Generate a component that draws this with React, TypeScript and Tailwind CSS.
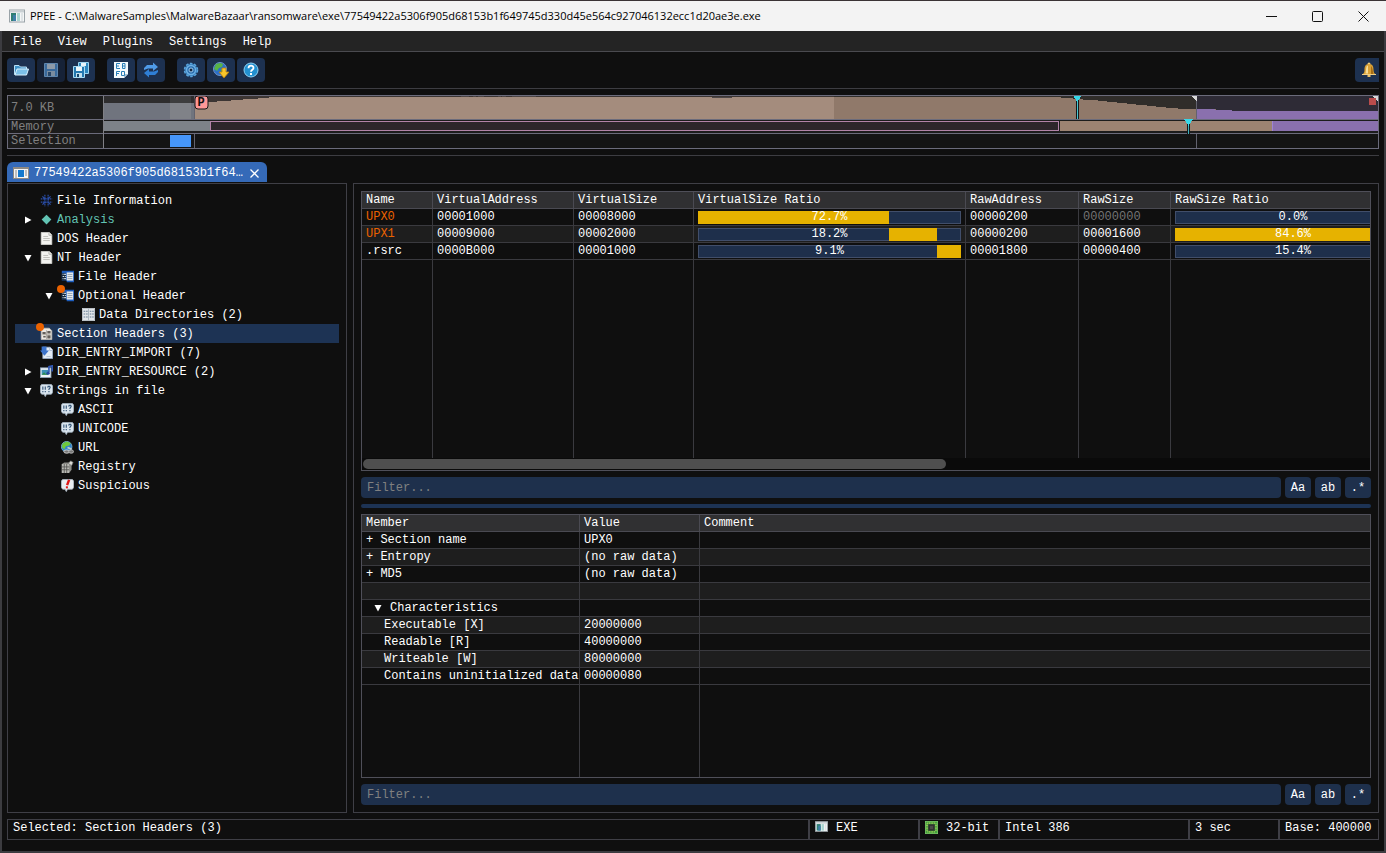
import React from 'react'

type IconName =
  | 'exe' | 'open' | 'save' | 'saveAll' | 'hex' | 'refresh' | 'gear' | 'update' | 'help' | 'bell'
  | 'info' | 'diamond' | 'doc' | 'header' | 'dirs' | 'section' | 'import' | 'resource'
  | 'strings' | 'url' | 'registry' | 'suspicious' | 'chip' | 'window'

const drawings: Record<IconName, React.ReactNode> = {
  exe: (
    <>
      <rect x="0.5" y="2" width="15" height="12" fill="#f4f6f7" stroke="#9aa3a8" />
      <rect x="1" y="2.5" width="14" height="2" fill="#c9d0d4" />
      <rect x="2" y="5" width="5" height="8" fill="#2f7f73" />
      <rect x="4" y="7" width="3" height="6" fill="#3f7fa8" />
      <rect x="8" y="5" width="3" height="8" fill="#a9d5cf" />
      <rect x="12" y="5" width="2" height="8" fill="#dfe4e6" />
    </>
  ),
  open: (
    <>
      <path d="M1.5 12.5V3.5H6l1.5 1.5h6v7.5z" fill="#3f92c8" stroke="#b9e0f5" />
      <path d="M2 13L4 7H15.5l-2 6z" fill="#7cc0e8" stroke="#d8f0fc" />
    </>
  ),
  save: (
    <>
      <path d="M1.5 1.5h13v13h-13z" fill="#39699b" stroke="#5f86ad" />
      <rect x="4" y="2" width="8" height="5" fill="#8d9aa8" />
      <rect x="4" y="9" width="8" height="5" fill="#7b8da0" />
      <rect x="5" y="10" width="3" height="4" fill="#27476a" />
    </>
  ),
  saveAll: (
    <>
      <path d="M5.5 0.5h10v11h-10z" fill="#2c86be" stroke="#9bd3ef" />
      <rect x="8" y="1" width="5" height="3" fill="#e8f4fa" />
      <path d="M0.5 4.5h11v11h-11z" fill="#2478b0" stroke="#a8dbf3" />
      <rect x="3" y="5" width="6" height="4" fill="#eef7fb" />
      <rect x="3" y="11" width="6" height="4" fill="#c3dfee" />
      <rect x="4" y="12" width="2" height="3" fill="#14476e" />
    </>
  ),
  hex: (
    <>
      <path d="M1 0h14v12l-4 4H1z" fill="#f4f9fc" />
      <path d="M15 12h-4v4z" fill="#a6c4d8" />
      <path
        d="M7 1.500H3.500v5H7M3.500 4H6M9.500 1.500v5H12V1.500zM9.500 4H12M3.500 14V9.500H7M3.500 11.500H6M8.500 9.500h3v4h-3z"
        fill="none"
        stroke="#2a7fb8"
      />
    </>
  ),
  refresh: (
    <>
      <path d="M1 8V6l3-3h6V0.5L15 5l-5 4V6.5H5z" fill="#4f9be8" />
      <path d="M15 8v2l-3 3H6v2.5L1 11l5-4v2.5h5z" fill="#2f7fd6" />
    </>
  ),
  gear: (
    <>
      <circle cx="8" cy="8" r="6.500" fill="#3478b4" stroke="#5ba5dc" strokeWidth="1.500" strokeDasharray="2.600 1.500" />
      <circle cx="8" cy="8" r="4.500" fill="#2a6cac" stroke="#6cb0e4" strokeWidth="1.500" />
      <circle cx="8" cy="8" r="2" fill="#15263f" stroke="#9ccbf0" />
    </>
  ),
  update: (
    <>
      <circle cx="7" cy="7" r="6.5" fill="#2c6fc8" stroke="#6f94c8" />
      <path d="M3 2l4-1 3 1-1 3-3 1-2 3-3-2zM8 7l4-1 1 2-3 4-2-2z" fill="#58b345" />
      <path d="M9 6h4v4h3l-5 6-5-6h3z" fill="#f8c62a" stroke="#b97d10" strokeWidth="0.8" />
    </>
  ),
  help: (
    <>
      <circle cx="8" cy="8" r="7" fill="#2290d0" stroke="#8fd0f2" />
      <path d="M5.5 6.200C5.500 2.800 10.700 3 10.500 6c0 1.700-2.500 1.800-2.500 3.700" fill="none" stroke="#fff" strokeWidth="1.8" />
      <rect x="7" y="11" width="2" height="2" fill="#fff" />
    </>
  ),
  bell: (
    <>
      <circle cx="8" cy="2" r="1.5" fill="#f3cf7a" />
      <path d="M8 2c4 0 4.500 3 4.500 6 0 2 .5 3 2 4.500h-13C3 11 3.500 10 3.500 8c0-3 .5-6 4.500-6z" fill="#d9a035" />
      <path d="M6 4c-1 1-1 5-1.500 7.500H7V3.500z" fill="#f6dc97" />
      <path d="M10 4v8h2.500C11.500 9 12 6 10 4z" fill="#a56c14" />
      <path d="M1 12.500h14" stroke="#f0cf86" />
      <rect x="6.5" y="13" width="3" height="2" fill="#e9c06a" />
    </>
  ),
  info: (
    <>
      <path d="M6 1v14M10 1v14M1 6h14M1 10h14" stroke="#2b4ea8" strokeWidth="1.500" strokeDasharray="2 0.700" />
      <path d="M3 3l10 10M13 3L3 13" stroke="#2b4ea8" strokeWidth="1.500" />
      <rect x="6.500" y="6.500" width="3" height="3" fill="#101a33" />
    </>
  ),
  diamond: <path d="M8 2l6 6-6 6-6-6z" fill="#62c4b4" />,
  doc: (
    <>
      <path d="M1.5 0.5h10l3 3v12h-13z" fill="#f3f3f0" stroke="#dcdcd8" />
      <path d="M11 1v3h3.5" fill="none" stroke="#a9a9a4" />
      <path d="M4 5.500h6M4 8h8M4 10.500h8" stroke="#b5b5b0" />
    </>
  ),
  header: (
    <>
      <path d="M1 1h15v14H7v-2H1z" fill="#1c5cbc" />
      <rect x="7" y="3" width="8" height="10" fill="#e6ebee" />
      <path d="M8 5.500h6M8 8h6M8 10.500h6" stroke="#8797a6" />
      <rect x="1" y="4" width="5" height="9" fill="#16283c" />
      <path d="M2 5.500h1M4 5.500h2M2 8h2M5 8h1M2 10.500h1M4 10.500h2" stroke="#dce8f2" strokeWidth="1.5" />
    </>
  ),
  dirs: (
    <>
      <rect x="0.5" y="0.5" width="15" height="15" fill="#e2e6ea" stroke="#c6ccd2" />
      <path d="M2 4h5M2 7.500h5M2 11h5M9.500 4h5M9.500 7.500h5M9.500 11h5" stroke="#667d94" strokeWidth="1.300" strokeDasharray="2 1" />
      <path d="M8 1v14" stroke="#9eabb8" />
    </>
  ),
  section: (
    <>
      <path d="M1.5 1.5h10l3 3v11h-13z" fill="#ece9e2" stroke="#c6c2b9" />
      <path d="M3 6h4v3H3zM9 5h4v3H9zM4 11h3v2H4zM9 10h4v4H9z" fill="#63605a" />
      <path d="M3 9.500h10M8 4v11" stroke="#a5a199" />
    </>
  ),
  import: (
    <>
      <path d="M3.5 1.5h9l3 3v11h-12z" fill="#e4ecf6" stroke="#9fb2cc" />
      <path d="M12 1.500v4h3.500" fill="#fff" stroke="#9fb2cc" />
      <path d="M2 0.500h6v5h3L5.500 12 0 5.500h2z" fill="#3d74cc" />
      <path d="M8 13h5" stroke="#a9bbd2" />
    </>
  ),
  resource: (
    <>
      <rect x="0.5" y="3.5" width="13" height="12" fill="#edf2f6" stroke="#8aa0b6" />
      <rect x="2" y="6" width="8" height="6" fill="#3b8fb4" />
      <path d="M2 12l3-3 2 2 2-2 1 3z" fill="#2f8a4c" />
      <path d="M11 9V2l4-1v7" fill="none" stroke="#3158b4" strokeWidth="2" />
      <circle cx="10" cy="10" r="2" fill="#2547a0" />
    </>
  ),
  strings: (
    <>
      <path d="M2 0.5h12l1.5 2v8l-1.5 2H8L6.500 15.500 5 12.500H2l-1.500-2v-8z" fill="#dbe6ef" stroke="#a8b8c6" />
      <path d="M3.500 3v4M6.500 3v4M3.500 8.500V10M6.500 8.500V10M9.500 4.500l.5-1.500h2l.5 1.500-1.500 2V7.500M11 8.500V10" fill="none" stroke="#37587a" strokeWidth="1.4" />
    </>
  ),
  url: (
    <>
      <circle cx="7" cy="7" r="6.5" fill="#2f83cc" stroke="#7fb9dc" />
      <path d="M2 3l5-2.500 5 2-2 3-4 1-2 4-3-3z" fill="#6fc83c" />
      <ellipse cx="7" cy="13" rx="3.5" ry="2" fill="#777" stroke="#d0d0d0" strokeWidth="1.2" />
      <ellipse cx="12.5" cy="13" rx="3" ry="2" fill="#777" stroke="#b5b5b5" strokeWidth="1.2" />
      <path d="M8 8l5 2" stroke="#c5cdc9" strokeWidth="2" />
    </>
  ),
  registry: (
    <>
      <path d="M1 5l3-2h9v9l-3 4H1z" fill="#8c8c88" />
      <path d="M1 5h9v11H1z" fill="#b8b8b3" />
      <path d="M1 8.500h9M1 12h9M4 5v11M7 5v11" stroke="#535350" />
      <path d="M9 4l3-3 3 2-2 4z" fill="#dadad5" stroke="#666" strokeWidth="0.8" />
    </>
  ),
  suspicious: (
    <>
      <path d="M2 0.5h12l1.5 2v8l-1.5 2H8L6.500 15.500 5 12.500H2l-1.500-2v-8z" fill="#e9eef3" stroke="#b4bfca" />
      <path d="M10 1L7.500 7.500" stroke="#e01818" strokeWidth="3" />
      <rect x="6" y="9" width="2.5" height="2.5" fill="#e01818" />
    </>
  ),
  chip: (
    <>
      <rect x="0.5" y="0.5" width="15" height="15" fill="#3fa23c" stroke="#7acb68" />
      <path d="M3 2.500h10M3 13.500h10M2.500 3v10M13.500 3v10" stroke="#c9cf62" strokeWidth="1.5" strokeDasharray="1 1" />
      <rect x="4" y="4" width="8" height="8" fill="#31312f" />
      <rect x="6" y="6" width="4" height="4" fill="#4b4b48" />
    </>
  ),
  window: (
    <>
      <rect x="0.5" y="2.5" width="15" height="11" fill="#f5f5f5" stroke="#8d8983" />
      <path d="M1 3.500h14" stroke="#8d8983" />
      <path d="M2 6h2M2 8h2M2 10h2M2 12h2M12 6h2M12 8h2M12 10h2" stroke="#8b8b8b" />
      <rect x="5" y="5" width="6" height="7" fill="#1579cd" />
    </>
  ),
}

const Icon = ({ name, className = 'size-4' }: { name: IconName; className?: string }) => (
  <svg viewBox="0 0 16 16" className={`shrink-0 ${className}`} aria-hidden="true">
    {drawings[name]}
  </svg>
)

const Arrow = ({ open }: { open: boolean }) => (
  <svg viewBox="0 0 8 8" className="size-2 shrink-0" fill="#fff" aria-hidden="true">
    {open ? <path d="M0.5 1h7L4 7.5z" /> : <path d="M1 0.5v7L7.500 4z" />}
  </svg>
)

const toolGroups: { icon: IconName; label: string; disabled?: boolean }[][] = [
  [
    { icon: 'open', label: 'Open' },
    { icon: 'save', label: 'Save', disabled: true },
    { icon: 'saveAll', label: 'Save all' },
  ],
  [
    { icon: 'hex', label: 'Hex view' },
    { icon: 'refresh', label: 'Reload' },
  ],
  [
    { icon: 'gear', label: 'Options' },
    { icon: 'update', label: 'Check for updates' },
    { icon: 'help', label: 'About' },
  ],
]

interface TreeItem {
  text: string
  icon: IconName
  level: number
  open?: boolean
  flagged?: boolean
  selected?: boolean
  color?: string
}

const tree: TreeItem[] = [
  { text: 'File Information', icon: 'info', level: 0 },
  { text: 'Analysis', icon: 'diamond', level: 0, open: false, color: 'text-[#62c4b4]' },
  { text: 'DOS Header', icon: 'doc', level: 0 },
  { text: 'NT Header', icon: 'doc', level: 0, open: true },
  { text: 'File Header', icon: 'header', level: 1 },
  { text: 'Optional Header', icon: 'header', level: 1, open: true, flagged: true },
  { text: 'Data Directories (2)', icon: 'dirs', level: 2 },
  { text: 'Section Headers (3)', icon: 'section', level: 0, flagged: true, selected: true },
  { text: 'DIR_ENTRY_IMPORT (7)', icon: 'import', level: 0 },
  { text: 'DIR_ENTRY_RESOURCE (2)', icon: 'resource', level: 0, open: false },
  { text: 'Strings in file', icon: 'strings', level: 0, open: true },
  { text: 'ASCII', icon: 'strings', level: 1 },
  { text: 'UNICODE', icon: 'strings', level: 1 },
  { text: 'URL', icon: 'url', level: 1 },
  { text: 'Registry', icon: 'registry', level: 1 },
  { text: 'Suspicious', icon: 'suspicious', level: 1 },
]

const indents = ['pl-[9px]', 'pl-[30px]', 'pl-[51px]']

const sections = [
  { name: 'UPX0', va: '00001000', vs: '00008000', vr: 72.7, vStart: 0, ra: '00000200', rs: '00000000', rr: 0, rStart: 0, packed: true },
  { name: 'UPX1', va: '00009000', vs: '00002000', vr: 18.2, vStart: 72.7, ra: '00000200', rs: '00001600', rr: 84.6, rStart: 0, packed: true },
  { name: '.rsrc', va: '0000B000', vs: '00001000', vr: 9.1, vStart: 90.9, ra: '00001800', rs: '00000400', rr: 15.4, rStart: 84.6, packed: false },
]

const sectionCols = [
  { title: 'Name', width: 'w-[71px]' },
  { title: 'VirtualAddress', width: 'w-[141px]' },
  { title: 'VirtualSize', width: 'w-[120px]' },
  { title: 'VirtualSize Ratio', width: 'w-[272px]' },
  { title: 'RawAddress', width: 'w-[113px]' },
  { title: 'RawSize', width: 'w-[92px]' },
  { title: 'RawSize Ratio', width: 'w-[245px]' },
]

const members = [
  { member: '+ Section name', value: 'UPX0', pad: 'pl-1' },
  { member: '+ Entropy', value: '(no raw data)', pad: 'pl-1' },
  { member: '+ MD5', value: '(no raw data)', pad: 'pl-1' },
  { member: '', value: '', pad: 'pl-1' },
  { member: 'Characteristics', value: '', pad: 'pl-3', group: true },
  { member: 'Executable [X]', value: '20000000', pad: 'pl-[22px]' },
  { member: 'Readable [R]', value: '40000000', pad: 'pl-[22px]' },
  { member: 'Writeable [W]', value: '80000000', pad: 'pl-[22px]' },
  { member: 'Contains uninitialized data', value: '00000080', pad: 'pl-[22px]' },
]

const RatioBar = ({ start, value }: { start: number; value: number }) => (
  <div className="relative h-[13px] bg-[#1e2f4b] text-center leading-3 ring-1 ring-[#414e6a] ring-inset">
    {value > 0 && (
      <div
        className="absolute inset-y-0 bg-[#e6b200]"
        style={{ left: `${start}%`, width: `${value}%` }}
      />
    )}
    <span className="relative">{value.toFixed(1)}%</span>
  </div>
)

const FilterRow = ({ label }: { label: string }) => (
  <div className="flex h-[21px] shrink-0 gap-1">
    <input
      type="text"
      aria-label={label}
      placeholder="Filter..."
      className="min-w-0 flex-1 rounded bg-[#1e304c] px-1.5 text-white outline-none placeholder:text-[#808080]"
    />
    {['Aa', 'ab', '.*'].map((t) => (
      <button key={t} className="w-[26px] rounded bg-[#1e304c] hover:bg-[#2a4570]">
        {t}
      </button>
    ))}
  </div>
)

const FileMap = () => (
  <section className="flex h-[54px] shrink-0 border border-[#6b6b7b]">
    <div className="flex w-24 shrink-0 flex-col border-r border-[#808085] bg-[#1c1c1c] text-[#808080]">
      <div className="flex h-6 items-center border-b border-[#6b6b7b] px-[3px]">7.0 KB</div>
      <div className="flex h-3.5 items-center border-b border-[#6b6b7b] px-[3px]">Memory</div>
      <div className="flex h-3.5 items-center px-[3px]">Selection</div>
    </div>
    <svg viewBox="0 0 1274 52" preserveAspectRatio="none" className="h-full min-w-0 flex-1" shapeRendering="crispEdges">
      {/* raw file layout */}
      <rect width="91" height="23" fill="#2e2d2e" />
      <rect x="66" width="21" height="23" fill="#3d3d3e" />
      <rect y="7" width="91" height="16" fill="#70747e" />
      <rect x="66" y="7" width="21" height="16" fill="#808288" />
      <rect x="91" width="639" height="23" fill="#3c3533" />
      <rect x="730" width="362" height="23" fill="#302d2a" />
      <rect x="1092" width="182" height="23" fill="#2e2b36" />
      <path d="M91 23V6h22V5h14V4h12V3h15V2h11V1h565v22z" fill="#a48c7d" />
      <path d="M730 23V1h227v1h12v1h10v1h15v1h9v1h10v1h10v1h9v1h11v1h9v1h10v1h12v1h38v10z" fill="#90796a" />
      <path d="M357 0.500h8M369 0.500h3M374 0.500h6M394 0.500h3M398 0.500h4M408 0.500h24" stroke="#4e4645" />
      <path d="M608 1.500h20" stroke="#4e4645" />
      <path d="M1093 23V13h18v1h17v1h146v8z" fill="#8a70ae" />
      {/* memory layout */}
      <rect y="23" width="1274" height="15" fill="#1c1c1c" />
      <rect y="25" width="106" height="10" fill="#7d8288" />
      <rect x="106" y="25" width="849" height="10" fill="#b283a8" />
      <rect x="107" y="26" width="847" height="8" fill="#2d262b" />
      <rect x="956" y="25" width="212" height="10" fill="#9c8372" />
      <rect x="1168" y="25" width="106" height="10" fill="#8a70ae" />
      <rect x="1168" y="25" width="1" height="10" fill="#9d84d4" />
      {/* selection */}
      <rect y="38" width="1274" height="14" fill="#141414" />
      <rect x="66" y="39" width="21" height="12" fill="#4696fa" />
      <path d="M0 23.500h1274M0 37.500h1274" stroke="#6b6b7b" />
      <path d="M90.500 0v23M90.500 38v14M1092.500 0v23M1092.500 38v14" stroke="#62626e" />
      <path d="M1087 0h6v6zM1268 0h6v6z" fill="#d8d8d8" />
      <rect x="1265" y="2" width="7" height="7" fill="#b94c4c" />
      <rect x="972" y="2" width="3" height="21" fill="#14181a" />
      <rect x="973" y="2" width="1" height="21" fill="#48c8d4" />
      <path d="M969.500 0h8L973.500 6z" fill="#38d8e8" />
      <rect x="1083" y="26" width="3" height="12" fill="#14181a" />
      <rect x="1084" y="26" width="1" height="12" fill="#3fb0bc" />
      <path d="M1080 23h9l-4.500 7z" fill="#38d8e8" />
      <rect x="91" y="0" width="13" height="13" rx="3" fill="#ff9898" stroke="#181818" shapeRendering="auto" />
      <text x="97" y="10" textAnchor="middle" fill="#101010" className="text-xs font-bold">P</text>
    </svg>
  </section>
)

const Tree = () => (
  <ul className="w-[340px] shrink-0 overflow-hidden border border-[#3f3f46] p-[7px]">
    {tree.map((n) => (
      <li
        key={n.text}
        className={`flex h-[19px] items-center ${indents[n.level]} ${n.selected ? 'bg-[#1d3354]' : ''}`}
      >
        <button className="flex w-4 items-center" aria-label={n.open === undefined ? undefined : `Toggle ${n.text}`} disabled={n.open === undefined}>
          {n.open !== undefined && <Arrow open={n.open} />}
        </button>
        <span className="relative mr-1">
          <Icon name={n.icon} className="size-[13px]" />
          {n.flagged && <span className="absolute -left-1 -top-1 size-2 rounded-full bg-[#ea6200]" />}
        </span>
        <span className={n.color ?? 'text-white'}>{n.text}</span>
      </li>
    ))}
  </ul>
)

const cell = 'h-[17px] border-b border-r border-[#3a3a3f] px-1 whitespace-nowrap'
const headCell = 'h-[17px] border-b border-r border-[#4a4a52] bg-[#303032] px-1 text-left font-normal whitespace-nowrap'

const SectionTable = () => (
  <div className="flex h-[280px] shrink-0 flex-col border border-[#4f4f59]">
    <div className="min-h-0 flex-1 overflow-hidden">
      <table className="h-full w-[1054px] table-fixed border-separate border-spacing-0">
        <thead>
          <tr>
            {sectionCols.map((c) => (
              <th key={c.title} className={`${headCell} ${c.width}`}>{c.title}</th>
            ))}
          </tr>
        </thead>
        <tbody>
          {sections.map((s, i) => (
            <tr key={s.name} className={i % 2 ? 'bg-[#1e1e1e]' : ''}>
              <td className={`${cell} ${s.packed ? 'text-[#ea6200]' : ''}`}>{s.name}</td>
              <td className={cell}>{s.va}</td>
              <td className={cell}>{s.vs}</td>
              <td className={cell}><RatioBar start={s.vStart} value={s.vr} /></td>
              <td className={cell}>{s.ra}</td>
              <td className={`${cell} ${s.rr === 0 ? 'text-[#747474]' : ''}`}>{s.rs}</td>
              <td className={cell}><RatioBar start={s.rStart} value={s.rr} /></td>
            </tr>
          ))}
          <tr>
            {sectionCols.map((c) => (
              <td key={c.title} className="border-r border-[#3a3a3f]" />
            ))}
          </tr>
        </tbody>
      </table>
    </div>
    <div className="h-3 shrink-0 bg-[#0a0a0a] px-px pt-px">
      <div className="h-2.5 w-[58%] rounded-full bg-[#4f4f4f]" />
    </div>
  </div>
)

const MemberTable = () => (
  <div className="min-h-0 flex-1 overflow-hidden border border-[#4f4f59]">
    <table className="h-full w-full table-fixed border-separate border-spacing-0">
      <thead>
        <tr>
          <th className={`${headCell} w-[218px]`}>Member</th>
          <th className={`${headCell} w-[120px]`}>Value</th>
          <th className="h-[17px] border-b border-[#4a4a52] bg-[#303032] px-1 text-left font-normal">Comment</th>
        </tr>
      </thead>
      <tbody>
        {members.map((m, i) => (
          <tr key={i} className={i % 2 ? 'bg-[#1e1e1e]' : ''}>
            <td className={`h-[17px] border-b border-r border-[#3a3a3f] whitespace-nowrap ${m.pad}`}>
              {m.group ? (
                <button className="flex items-center gap-2">
                  <Arrow open />
                  {m.member}
                </button>
              ) : (
                m.member
              )}
            </td>
            <td className={cell}>{m.value}</td>
            <td className="border-b border-[#3a3a3f]" />
          </tr>
        ))}
        <tr>
          <td className="border-r border-[#3a3a3f]" />
          <td className="border-r border-[#3a3a3f]" />
          <td />
        </tr>
      </tbody>
    </table>
  </div>
)

const StatusBar = () => (
  <footer className="flex h-[21px] shrink-0 leading-4 *:flex *:items-start *:border *:border-[#3f3f46] *:px-[5px]">
    <div className="min-w-0 flex-1">Selected: Section Headers (3)</div>
    <div className="w-[110px] gap-2">
      <Icon name="exe" className="size-[13px]" />
      EXE
    </div>
    <div className="w-20 gap-2">
      <Icon name="chip" className="mt-px size-[13px]" />
      32-bit
    </div>
    <div className="w-[190px]">Intel 386</div>
    <div className="w-[90px]">3 sec</div>
    <div className="w-[100px] whitespace-nowrap">Base: 400000</div>
  </footer>
)

export default function App() {
  return (
    <div className="flex h-screen flex-col bg-[#0f0f0f] font-['Liberation_Mono',monospace] text-xs leading-4 text-white">
      <header className="flex h-[31px] shrink-0 items-center border-t border-[#3a3335] bg-[#f3f3f3] pl-[9px] text-black">
        <Icon name="exe" />
        <h1 className="ml-[5px] flex-1 truncate font-['Open_Sans',sans-serif] text-[11px]">
          PPEE - C:\MalwareSamples\MalwareBazaar\ransomware\exe\77549422a5306f905d68153b1f649745d330d45e564c927046132ecc1d20ae3e.exe
        </h1>
        <div className="flex h-full">
          <button aria-label="Minimize" className="flex w-[46px] items-center justify-center">
            <svg viewBox="0 0 11 11" className="size-[11px]" stroke="#111"><path d="M0 5.500h11" /></svg>
          </button>
          <button aria-label="Maximize" className="flex w-[46px] items-center justify-center">
            <svg viewBox="0 0 11 11" className="size-[11px]" fill="none" stroke="#111"><rect x="0.5" y="0.5" width="10" height="10" rx="1" /></svg>
          </button>
          <button aria-label="Close" className="flex w-[46px] items-center justify-center">
            <svg viewBox="0 0 11 11" className="size-[11px]" stroke="#111"><path d="M0.500 0.500l10 10M10.500 0.500l-10 10" /></svg>
          </button>
        </div>
      </header>

      <div className="flex min-h-0 flex-1 flex-col border-2 border-t-0 border-[#3c3c40]">
        <nav className="flex h-[21px] shrink-0 items-center gap-4 border-b border-[#4a4a4f] bg-[#242424] px-[11px] pt-0.5">
          {['File', 'View', 'Plugins', 'Settings', 'Help'].map((m) => (
            <button key={m}>{m}</button>
          ))}
        </nav>

        <div className="flex min-h-0 flex-1 flex-col px-[5px] pt-1.5 pb-[11px]">
          <div className="flex h-[31px] shrink-0 items-start gap-3 border-b border-[#3d3d42]">
            {toolGroups.map((group, i) => (
              <div key={i} className="flex gap-0.5">
                {group.map((t) => (
                  <button
                    key={t.icon}
                    aria-label={t.label}
                    disabled={t.disabled}
                    className={`flex h-6 w-7 items-center justify-center rounded ${t.disabled ? 'bg-[#162237]' : 'bg-[#1d3150]'}`}
                  >
                    <Icon name={t.icon} />
                  </button>
                ))}
              </div>
            ))}
            <button aria-label="Notifications" className="ml-auto flex h-6 w-6 items-center justify-end rounded-l bg-[#1d3150] pr-0.5">
              <Icon name="bell" />
            </button>
          </div>

          <div className="mt-1.5 shrink-0 border-b border-[#3d3d42] pb-1.5">
            <FileMap />
          </div>

          <div className="mt-1.5 flex shrink-0">
            <div className="flex h-5 w-[260px] items-center rounded-t-md bg-[#356ab8] pt-0.5 pl-1.5 pr-2">
              <Icon name="window" />
              <span className="ml-[5px] flex-1 truncate">77549422a5306f905d68153b1f649…</span>
              <button aria-label="Close tab">
                <svg viewBox="0 0 9 9" className="size-[9px]" stroke="#fff" strokeWidth="1.300"><path d="M0.500 0.500l8 8M8.500 0.500l-8 8" /></svg>
              </button>
            </div>
          </div>

          <main className="mt-px mb-1.5 flex min-h-0 flex-1 gap-1.5">
            <Tree />
            <div className="flex min-w-0 flex-1 flex-col gap-1.5 border border-[#3f3f46] p-[7px]">
              <SectionTable />
              <FilterRow label="Filter sections" />
              <div className="h-1 shrink-0 rounded-full bg-[#1d3354]" />
              <MemberTable />
              <FilterRow label="Filter members" />
            </div>
          </main>

          <StatusBar />
        </div>
      </div>
    </div>
  )
}
